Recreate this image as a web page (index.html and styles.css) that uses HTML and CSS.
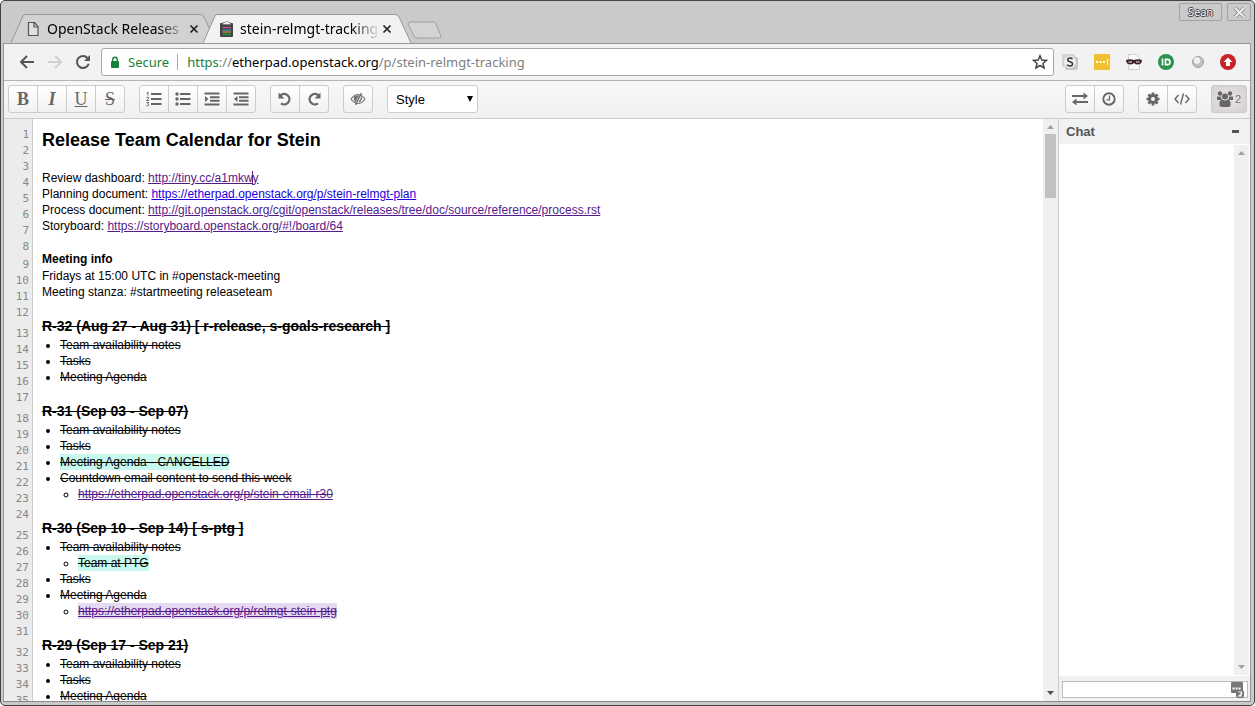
FILE: index.html
```html
<!DOCTYPE html>
<html lang="en">
<head>
<meta charset="utf-8">
<title>stein-relmgt-tracking</title>
<link rel="stylesheet" href="styles.css">
</head>
<body>
<div class="window">
  <header class="titlebar">
    <div class="tab tab-back">
      <svg class="tab-shape" width="204" height="29" viewBox="0 0 204 29"><path d="M1 28.500L13 2Q14 .5 16 .5H190Q193 .5 194 3L206 28.500" fill="#d2d2d2" stroke="#979797"/></svg>
      <svg class="tab-icon" width="16" height="16" viewBox="0 0 16 16"><path d="M2.500 1.500H8.500L12 5.500V14.500H2.500ZM8 1.500V6H12" fill="#e0e0e0" stroke="#555" stroke-width="1.200"/></svg>
      <span class="tab-title">OpenStack Releases</span>
      <button class="tab-close" aria-label="Close tab"><svg width="10" height="10" viewBox="0 0 10 10"><path d="M1.500 1.500L8.500 8.500M8.500 1.500L1.500 8.500" stroke="#222" stroke-width="1.700"/></svg></button>
    </div>
    <div class="tab tab-active">
      <svg class="tab-shape" width="210" height="29" viewBox="0 0 210 29"><path d="M0 29L12 2Q13 .5 15 .5H192Q195 .5 196 3L208 29" fill="#f2f2f2" stroke="#979797"/></svg>
      <svg class="tab-icon" width="16" height="16" viewBox="0 0 16 16"><rect x="1" y="2" width="13" height="14" rx="1" fill="#444"/><path d="M4 3.500V1.500H6L7 .3H8.500L9.500 1.500H11.500V3.500Z" fill="#eee" stroke="#777" stroke-width=".8"/><path d="M3.500 6.500H12" stroke="#e34fa0" stroke-width="1"/><path d="M3.500 9H12" stroke="#35a6dc" stroke-width="1"/><path d="M3.500 11H12" stroke="#eba52e" stroke-width="1"/><path d="M3.500 13.500H12" stroke="#189a3c" stroke-width="1.600"/></svg>
      <span class="tab-title">stein-relmgt-tracking</span>
      <button class="tab-close" aria-label="Close tab"><svg width="10" height="10" viewBox="0 0 10 10"><path d="M1.500 1.500L8.500 8.500M8.500 1.500L1.500 8.500" stroke="#222" stroke-width="1.700"/></svg></button>
    </div>
    <button class="new-tab" aria-label="New tab"><svg width="36" height="18" viewBox="0 0 36 18"><path d="M3 1H26Q28 1 29 3L34 15Q34 17 32 17H10Q8 17 7 15L1 3Q1 1 3 1Z" fill="#d3d3d3" stroke="#a0a0a0"/></svg></button>
    <div class="win-buttons">
      <button class="win-btn user">Sean</button>
      <button class="win-btn close" aria-label="Close window"><svg width="13" height="13" viewBox="0 0 13 13"><path d="M2 2L11 11M11 2L2 11" stroke="#888" stroke-width="3.600"/><path d="M2 2L11 11M11 2L2 11" stroke="#f2f2f2" stroke-width="1.800"/></svg></button>
    </div>
  </header>

  <div class="page">
  <nav class="navbar">
    <button class="nav-btn" aria-label="Back"><svg width="16" height="16" viewBox="0 0 16 16"><path d="M15 8H2M8 2L2 8L8 14" fill="none" stroke="#555" stroke-width="2"/></svg></button>
    <button class="nav-btn" aria-label="Forward"><svg width="16" height="16" viewBox="0 0 16 16"><path d="M1 8H14M8 2L14 8L8 14" fill="none" stroke="#d0d0d0" stroke-width="2"/></svg></button>
    <button class="nav-btn" aria-label="Reload"><svg width="16" height="16" viewBox="0 0 16 16"><path d="M13.700 9.800A6 6 0 1 1 12.500 4" fill="none" stroke="#555" stroke-width="2"/><path d="M15 1V7H9Z" fill="#555"/></svg></button>
    <div class="omnibox">
      <svg width="10" height="13" viewBox="0 0 10 13"><rect x="1" y="5" width="8" height="7" rx="1" fill="#188038"/><path d="M2.700 5.500V3.500A2.300 2.300 0 0 1 7.300 3.500V5.500" fill="none" stroke="#188038" stroke-width="1.400"/></svg>
      <span class="secure">Secure</span>
      <span class="url"><span class="scheme">https</span>://<b>etherpad.openstack.org</b>/p/stein-relmgt-tracking</span>
      <svg width="16" height="16" viewBox="0 0 16 16"><path d="M8 1.800L9.900 6 14.500 6.400 11 9.400 12.100 14 8 11.500 3.900 14 5 9.400 1.500 6.400 6.100 6Z" fill="none" stroke="#444" stroke-width="1.500"/></svg>
    </div>
    <div class="extensions">
      <svg width="16" height="16" viewBox="0 0 16 16"><rect width="13" height="13" fill="#d4d4d4"/><rect x="3" y="3" width="13" height="13" rx="2" fill="#c6c6c6"/><circle cx="8" cy="8" r="6" fill="#eee"/><path d="M10.500 5Q9.500 4 8 4Q5.700 4 5.700 5.800Q5.700 7.400 8 7.700Q10.500 8.100 10.500 10Q10.500 12 8 12Q6 12 5.200 10.700" fill="none" stroke="#333" stroke-width="1.500"/></svg>
      <svg width="16" height="16" viewBox="0 0 16 16"><rect width="16" height="16" rx="1" fill="#efc12f"/><path d="M2 7H4V9H2ZM5.500 7H7.500V9H5.500ZM9 7H11V9H9ZM13 5H14V11H13Z" fill="#fff"/></svg>
      <svg width="16" height="16" viewBox="0 0 16 16"><path d="M2.500 .5H10L13.500 4V15.500H2.500Z" fill="#fafafa" stroke="#d0d0d0"/><path d="M0 6Q4 4.500 8 6Q12 4.500 16 6Q16 10 12 10.500Q9.500 10.500 8 9Q6.500 10.500 4 10.500Q0 10 0 6Z" fill="#402127"/><path d="M2.500 8H6M10 8H13.500" stroke="#bba8ac" stroke-width="1.300"/></svg>
      <svg width="16" height="16" viewBox="0 0 16 16"><circle cx="8" cy="8" r="8" fill="#2b934c"/><path d="M4.500 4.500V11.500" stroke="#fff" stroke-width="1.600"/><path d="M7.500 5.300V10.700H9.300Q12 10.700 12 8Q12 5.300 9.300 5.300Z" fill="none" stroke="#fff" stroke-width="1.700"/></svg>
      <svg width="16" height="16" viewBox="0 0 16 16"><circle cx="8" cy="8" r="5.500" fill="#c2c2c2" stroke="#a0a0a0"/><circle cx="7" cy="6.500" r="3.200" fill="#f2f2f2"/></svg>
      <svg width="16" height="16" viewBox="0 0 16 16"><circle cx="8" cy="8" r="8" fill="#c62428"/><path d="M8 3.500L12.500 8H10V12H6V8H3.500Z" fill="#fff"/></svg>
    </div>
  </nav>

  <div class="toolbar">
    <div class="group">
      <button class="glyph bold" aria-label="Bold">B</button>
      <button class="glyph italic" aria-label="Italic">I</button>
      <button class="glyph underline" aria-label="Underline">U</button>
      <button class="glyph strike" aria-label="Strikethrough">S</button>
    </div>
    <div class="group">
      <button aria-label="Ordered list"><svg width="16" height="16" viewBox="0 0 16 16"><path d="M5 3H15.500M5 8H15.500M5 13H15.500" stroke="#666" stroke-width="2"/><path d="M.8 2L2 1V4.500M.5 6.300H2.500V7.700L.7 9.500H3M.5 11.500H2.600L1.700 13Q3 13.200 2.500 14.400Q1.700 15.300.4 14.600" fill="none" stroke="#666"/></svg></button>
      <button aria-label="Unordered list"><svg width="16" height="16" viewBox="0 0 16 16"><path d="M5 3H15.500M5 8H15.500M5 13H15.500" stroke="#666" stroke-width="2.200"/><circle cx="2" cy="3" r="1.700" fill="#666"/><circle cx="2" cy="8" r="1.700" fill="#666"/><circle cx="2" cy="13" r="1.700" fill="#666"/></svg></button>
      <button aria-label="Indent"><svg width="16" height="16" viewBox="0 0 16 16"><path d="M.5 2.500H15.500M6 6.200H15.500M6 9.800H15.500M.5 13.500H15.500" stroke="#666" stroke-width="2"/><path d="M1 5L4.500 8L1 11Z" fill="#666"/></svg></button>
      <button aria-label="Outdent"><svg width="16" height="16" viewBox="0 0 16 16"><path d="M.5 2.500H15.500M6 6.200H15.500M6 9.800H15.500M.5 13.500H15.500" stroke="#666" stroke-width="2"/><path d="M4.500 5L1 8L4.500 11Z" fill="#666"/></svg></button>
    </div>
    <div class="group">
      <button aria-label="Undo"><svg width="16" height="16" viewBox="0 0 16 16"><path d="M3.500 4.500A5.200 5.200 0 1 1 4 12.300" fill="none" stroke="#666" stroke-width="2.300"/><path d="M1.500 1.500V7.500H7.500Z" fill="#666"/></svg></button>
      <button aria-label="Redo"><svg width="16" height="16" viewBox="0 0 16 16"><path d="M12.500 4.500A5.200 5.200 0 1 0 12 12.300" fill="none" stroke="#666" stroke-width="2.300"/><path d="M14.500 1.500V7.500H8.500Z" fill="#666"/></svg></button>
    </div>
    <div class="group">
      <button aria-label="Clear authorship colors"><svg width="16" height="16" viewBox="0 0 16 16"><path d="M1 8Q4 3.500 8 3.500Q12 3.500 15 8Q12 12.500 8 12.500Q4 12.500 1 8Z" fill="none" stroke="#777" stroke-width="1.200"/><path d="M4 5L9.500 4L5.500 11.500Q3 9 4 5Z" fill="#777"/><path d="M11.500 2L5.500 14" stroke="#666" stroke-width="1.300"/><path d="M11.500 5.500Q12 8.500 9 11" fill="none" stroke="#777" stroke-width="1.200"/></svg></button>
    </div>
    <label class="style-picker"><select aria-label="Style"><option>Style</option><option>Heading 1</option><option>Heading 2</option></select></label>
    <div class="group push">
      <button aria-label="Import or export"><svg width="16" height="16" viewBox="0 0 16 16"><path d="M0 5H12M4 11H16" stroke="#666" stroke-width="2.200"/><path d="M11.500 1.500L16 5L11.500 8.500ZM4.500 7.500L0 11L4.500 14.500Z" fill="#666"/></svg></button>
      <button aria-label="Timeslider"><svg width="16" height="16" viewBox="0 0 16 16"><circle cx="8" cy="8" r="5.700" fill="none" stroke="#666" stroke-width="1.900"/><path d="M8.500 4.500V8.800H5.500" fill="none" stroke="#666" stroke-width="1.300"/></svg></button>
    </div>
    <div class="group">
      <button aria-label="Settings"><svg width="16" height="16" viewBox="0 0 16 16"><circle cx="8" cy="8" r="3.500" fill="none" stroke="#666" stroke-width="3"/><path d="M8 1.500V4M8 12V14.500M1.500 8H4M12 8H14.500M3.400 3.400L5 5M11 11L12.600 12.600M12.600 3.400L11 5M5 11L3.400 12.600" stroke="#666" stroke-width="2.700"/></svg></button>
      <button aria-label="Embed"><svg width="16" height="16" viewBox="0 0 16 16"><path d="M4.500 4L1 8L4.500 12M11.500 4L15 8L11.500 12M9.500 2.500L6.500 13.500" fill="none" stroke="#666" stroke-width="1.400"/></svg></button>
    </div>
    <button class="users" aria-label="Users, 2 connected"><svg width="16" height="16" viewBox="0 0 16 16"><circle cx="3" cy="2.500" r="2.200"/><circle cx="13" cy="2.500" r="2.200"/><circle cx="8" cy="5.500" r="3"/><path d="M0 9V5.500H4Q4 8 5 9ZM16 9V5.500H12Q12 8 11 9ZM2.500 15V11Q3 8.500 5.500 8.500Q8 10.500 10.500 8.500Q13 8.500 13.500 11V15Q12.500 16 11 16H5Q3.500 16 2.500 15Z"/></svg><span>2</span></button>
  </div>

  <main class="workspace">
    <ol class="gutter">
      <li>1</li><li>2</li><li>3</li><li>4</li><li>5</li><li>6</li><li>7</li><li>8</li>
      <li class="after-sub">9</li><li>10</li><li>11</li><li>12</li>
      <li class="after-week">13</li><li>14</li><li>15</li><li>16</li><li>17</li>
      <li class="after-week">18</li><li>19</li><li>20</li><li>21</li><li>22</li><li>23</li><li>24</li>
      <li class="after-week">25</li><li>26</li><li>27</li><li>28</li><li>29</li><li>30</li><li>31</li>
      <li class="after-week">32</li><li>33</li><li>34</li><li>35</li>
    </ol>
    <article class="pad">
      <h1>Release Team Calendar for Stein</h1>
      <p class="links">Review dashboard: <a class="seen" href="#">http://tiny.cc/a1mkw<span class="caret"></span>y</a></p>
      <p>Planning document: <a href="#">https://etherpad.openstack.org/p/stein-relmgt-plan</a></p>
      <p>Process document: <a class="seen" href="#">http://git.openstack.org/cgit/openstack/releases/tree/doc/source/reference/process.rst</a></p>
      <p>Storyboard: <a class="seen" href="#">https://storyboard.openstack.org/#!/board/64</a></p>
      <h3>Meeting info</h3>
      <p>Fridays at 15:00 UTC in #openstack-meeting</p>
      <p>Meeting stanza: #startmeeting releaseteam</p>
      <h2><s>R-32 (Aug 27 - Aug 31) [ r-release, s-goals-research ]</s></h2>
      <ul>
        <li><s>Team availability notes</s></li>
        <li><s>Tasks</s></li>
        <li><s>Meeting Agenda</s></li>
      </ul>
      <h2><s>R-31 (Sep 03 - Sep 07)</s></h2>
      <ul>
        <li><s>Team availability notes</s></li>
        <li><s>Tasks</s></li>
        <li><s class="mint">Meeting Agenda - CANCELLED</s></li>
        <li><s>Countdown email content to send this week</s>
          <ul><li><a class="seen struck" href="#">https://etherpad.openstack.org/p/stein-email-r30</a></li></ul>
        </li>
      </ul>
      <h2><s>R-30 (Sep 10 - Sep 14) [ s-ptg ]</s></h2>
      <ul>
        <li><s>Team availability notes</s>
          <ul><li><s class="mint">Team at PTG</s></li></ul>
        </li>
        <li><s>Tasks</s></li>
        <li><s>Meeting Agenda</s>
          <ul><li><a class="seen struck lilac" href="#">https://etherpad.openstack.org/p/relmgt-stein-ptg</a></li></ul>
        </li>
      </ul>
      <h2><s>R-29 (Sep 17 - Sep 21)</s></h2>
      <ul>
        <li><s>Team availability notes</s></li>
        <li><s>Tasks</s></li>
        <li><s>Meeting Agenda</s></li>
      </ul>
    </article>
    <div class="scrollbar">
      <svg width="15" height="15" viewBox="0 0 15 15"><path d="M4 10L7.500 6L11 10Z" fill="#a0a0a0"/></svg>
      <div class="thumb"></div>
      <svg class="down" width="15" height="15" viewBox="0 0 15 15"><path d="M4 5L7.500 9L11 5Z" fill="#505050"/></svg>
    </div>
    <aside class="chat">
      <div class="chat-head"><h2>Chat</h2><button class="minimize" aria-label="Minimize chat"></button></div>
      <div class="chat-log">
        <div class="scrollbar">
          <svg width="15" height="15" viewBox="0 0 15 15"><path d="M4 10L7.500 6L11 10Z" fill="#a0a0a0"/></svg>
          <svg class="down" width="15" height="15" viewBox="0 0 15 15"><path d="M4 5L7.500 9L11 5Z" fill="#a0a0a0"/></svg>
        </div>
      </div>
      <div class="chat-entry">
        <input type="text" aria-label="Chat message">
        <svg class="badge" width="14" height="16" viewBox="0 0 14 16"><rect y="0" width="12" height="11" rx="1" fill="#777"/><path d="M1.500 5.500H3.500V7.500H1.500ZM4.500 5.500H6.500V7.500H4.500ZM7.500 5.500H9.500V7.500H7.500Z" fill="#fff"/><rect x="5" y="8" width="8" height="8" rx="2" fill="#777"/><path d="M7.500 10H10.500V12L8 14H11" fill="none" stroke="#fff" stroke-width="1.200"/></svg>
      </div>
    </aside>
  </main>
  </div>
</div>
</body>
</html>
```
FILE: styles.css
```css
* { box-sizing: border-box; }

body {
  margin: 0;
  background: #fff;
  font-family: "Liberation Sans", Arial, sans-serif;
  font-size: 12px;
  color: #000;
}

button { margin: 0; padding: 0; border: 0; background: none; font: inherit; color: #666; display: flex; align-items: center; justify-content: center; }
svg { display: block; flex: none; }

.window {
  height: 100vh;
  display: flex;
  flex-direction: column;
  padding: 0 3px 3px 2px;
  border: 1px solid #444;
  border-radius: 5px;
  background: #cacaca;
  overflow: hidden;
}

/* Title bar and tabs */
.titlebar { flex: none; height: 42px; display: flex; align-items: flex-end; padding-left: 7px; }
.tab {
  position: relative;
  height: 29px;
  width: 204px;
  display: flex;
  align-items: center;
  padding: 0 13px 0 16px;
  font: 14px/20px "Noto Sans", sans-serif;
}
.tab-shape { position: absolute; left: 0; top: 0; }
.tab-back { margin-right: -11px; }
.tab-active { width: 207px; z-index: 1; padding-right: 16px; }
.tab-icon { position: relative; margin-right: 5px; }
.tab-title {
  position: relative;
  flex: 1;
  min-width: 0;
  overflow: hidden;
  white-space: nowrap;
  -webkit-mask-image: linear-gradient(90deg, #000 80%, transparent);
  mask-image: linear-gradient(90deg, #000 80%, transparent);
}
.tab-close { position: relative; width: 14px; height: 14px; }
.new-tab { width: 36px; height: 18px; margin-bottom: 4px; margin-left: -3px; }
.win-buttons { align-self: flex-start; margin-left: auto; display: flex; gap: 5px; padding-top: 2px; }
.win-btn { height: 18px; border: 1px solid #a2a2a2; border-radius: 2px; }
.user {
  width: 43px;
  color: #f4f4f4;
  font: 11px/16px "Noto Sans", sans-serif;
  text-shadow: 1px 0 #444, -1px 0 #444, 0 1px #444, 0 -1px #444;
}
.close { width: 24px; }

.page {
  flex: 1;
  min-height: 0;
  display: flex;
  flex-direction: column;
  border: 1px solid #979797;
  border-bottom-color: #888;
  background: #f2f2f2;
}

/* Address bar */
.navbar { flex: none; height: 37px; display: flex; align-items: center; padding: 0 14px 0 9px; border-bottom: 1px solid #b4b4b4; }
.nav-btn { width: 28px; height: 28px; }
.omnibox {
  flex: 1;
  height: 28px;
  margin-left: 4px;
  padding: 0 5px 0 8px;
  display: flex;
  align-items: center;
  border: 1px solid #a8a8a8;
  border-radius: 3px;
  background: #fff;
  font: 13px/20px "Noto Sans", sans-serif;
}
.secure { margin-left: 8px; padding-right: 8px; border-right: 1px solid #aaa; color: #188038; line-height: 16px; }
.url { flex: 1; margin-left: 9px; color: #808080; white-space: nowrap; overflow: hidden; }
.url b { font-weight: 400; color: #000; }
.scheme { color: #188038; }
.extensions { display: flex; gap: 16px; margin-left: 8px; }
.extensions svg:last-child { margin-left: -2px; }

/* Editor toolbar */
.toolbar {
  flex: none;
  height: 38px;
  display: flex;
  align-items: center;
  gap: 14px;
  padding: 0 3px 1px 4px;
  border-bottom: 1px solid #ccc;
  background: linear-gradient(#f7f7f7, #eff1f1);
}
.group, .users, .style-picker select {
  height: 28px;
  border: 1px solid #ccc;
  border-radius: 3px;
  background: linear-gradient(#fff, #f1f1f1);
}
.group { display: flex; }
.group button { width: 29px; padding-bottom: 1px; }
.group button:first-child { width: 28px; }
.group button + button { border-left: 1px solid #ccc; }
.glyph { font: 18px/20px "Liberation Serif", serif; }
.glyph.bold { font-weight: 700; }
.glyph.italic { font-style: italic; font-weight: 700; }
.glyph.underline { text-decoration: underline; }
.glyph.strike { text-decoration: line-through; }
.style-picker { position: relative; display: flex; }
.style-picker select {
  appearance: none;
  width: 91px;
  padding: 0 8px;
  background: #fff;
  font: 13px "Liberation Sans", Arial, sans-serif;
  color: #000;
}
.style-picker::after {
  content: "";
  position: absolute;
  right: 5px;
  top: 11px;
  border: 3px solid transparent;
  border-top: 6px solid #000;
  border-bottom: 0;
  pointer-events: none;
}
.push { margin-left: auto; }
.users { width: 36px; gap: 2px; background: radial-gradient(#ebe3e3, #d5d1d1); font-size: 11px; color: #777; fill: #666; }

/* Pad */
.workspace { flex: 1; min-height: 0; display: flex; overflow: hidden; }
.gutter {
  flex: none;
  width: 29px;
  margin: 0;
  padding: 8px 3px 0 0;
  list-style: none;
  border-right: 1px solid #ccc;
  background: #ececec;
  color: #888;
  font: 11px/16px "DejaVu Sans Mono", monospace;
  text-align: right;
}
.gutter .after-sub { margin-top: 2px; }
.gutter .after-week { margin-top: 5px; }

.pad { flex: 1; min-width: 0; padding: 7px 9px 0; background: #fff; line-height: 16px; overflow: hidden; }
.pad h1 { margin: 0; font-size: 18px; line-height: 28px; }
.pad h2 { margin: 16px 0 0; font-size: 14px; line-height: 21px; }
.pad h3 { margin: 16px 0 0; font-size: 12px; line-height: 18px; }
.pad p { margin: 0; }
.pad .links { margin-top: 16px; }
.pad ul { margin: 0; padding-left: 18px; }
.pad a { color: #1a00e0; }
.pad a.seen { color: #551a8b; }
.pad a.struck { text-decoration: underline line-through; }
.mint { background: #c8f9ef; padding: 1px 0; }
.lilac { background: #e6d9f2; padding: 1px 0; }
.caret { display: inline-block; width: 1px; height: 14px; margin-left: -1px; background: #551a8b; vertical-align: -3px; }

.scrollbar { flex: none; width: 15px; display: flex; flex-direction: column; background: #eff1f1; }
.scrollbar .down { margin-top: auto; }
.thumb { height: 64px; margin: 0 2px; background: #c1c1c1; }

/* Chat */
.chat { flex: none; width: 192px; display: flex; flex-direction: column; border-left: 1px solid #ccc; background: #f0f1f1; }
.chat-head { height: 25px; display: flex; align-items: center; justify-content: space-between; padding: 0 11px 0 7px; }
.chat-head h2 { margin: 0; font-size: 13px; color: #555; }
.minimize { width: 7px; height: 3px; background: #555; }
.chat-log { flex: 1; display: flex; justify-content: flex-end; padding: 1px 1px 1px 0; background: #fff; }
.chat-entry { position: relative; height: 25px; padding: 5px 2px 3px 3px; display: flex; }
.chat-entry input { flex: 1; min-width: 0; border: 1px solid #bbb; background: #fff; font: 12px "Liberation Sans", Arial, sans-serif; }
.badge { position: absolute; right: 5px; top: 6px; }
```
